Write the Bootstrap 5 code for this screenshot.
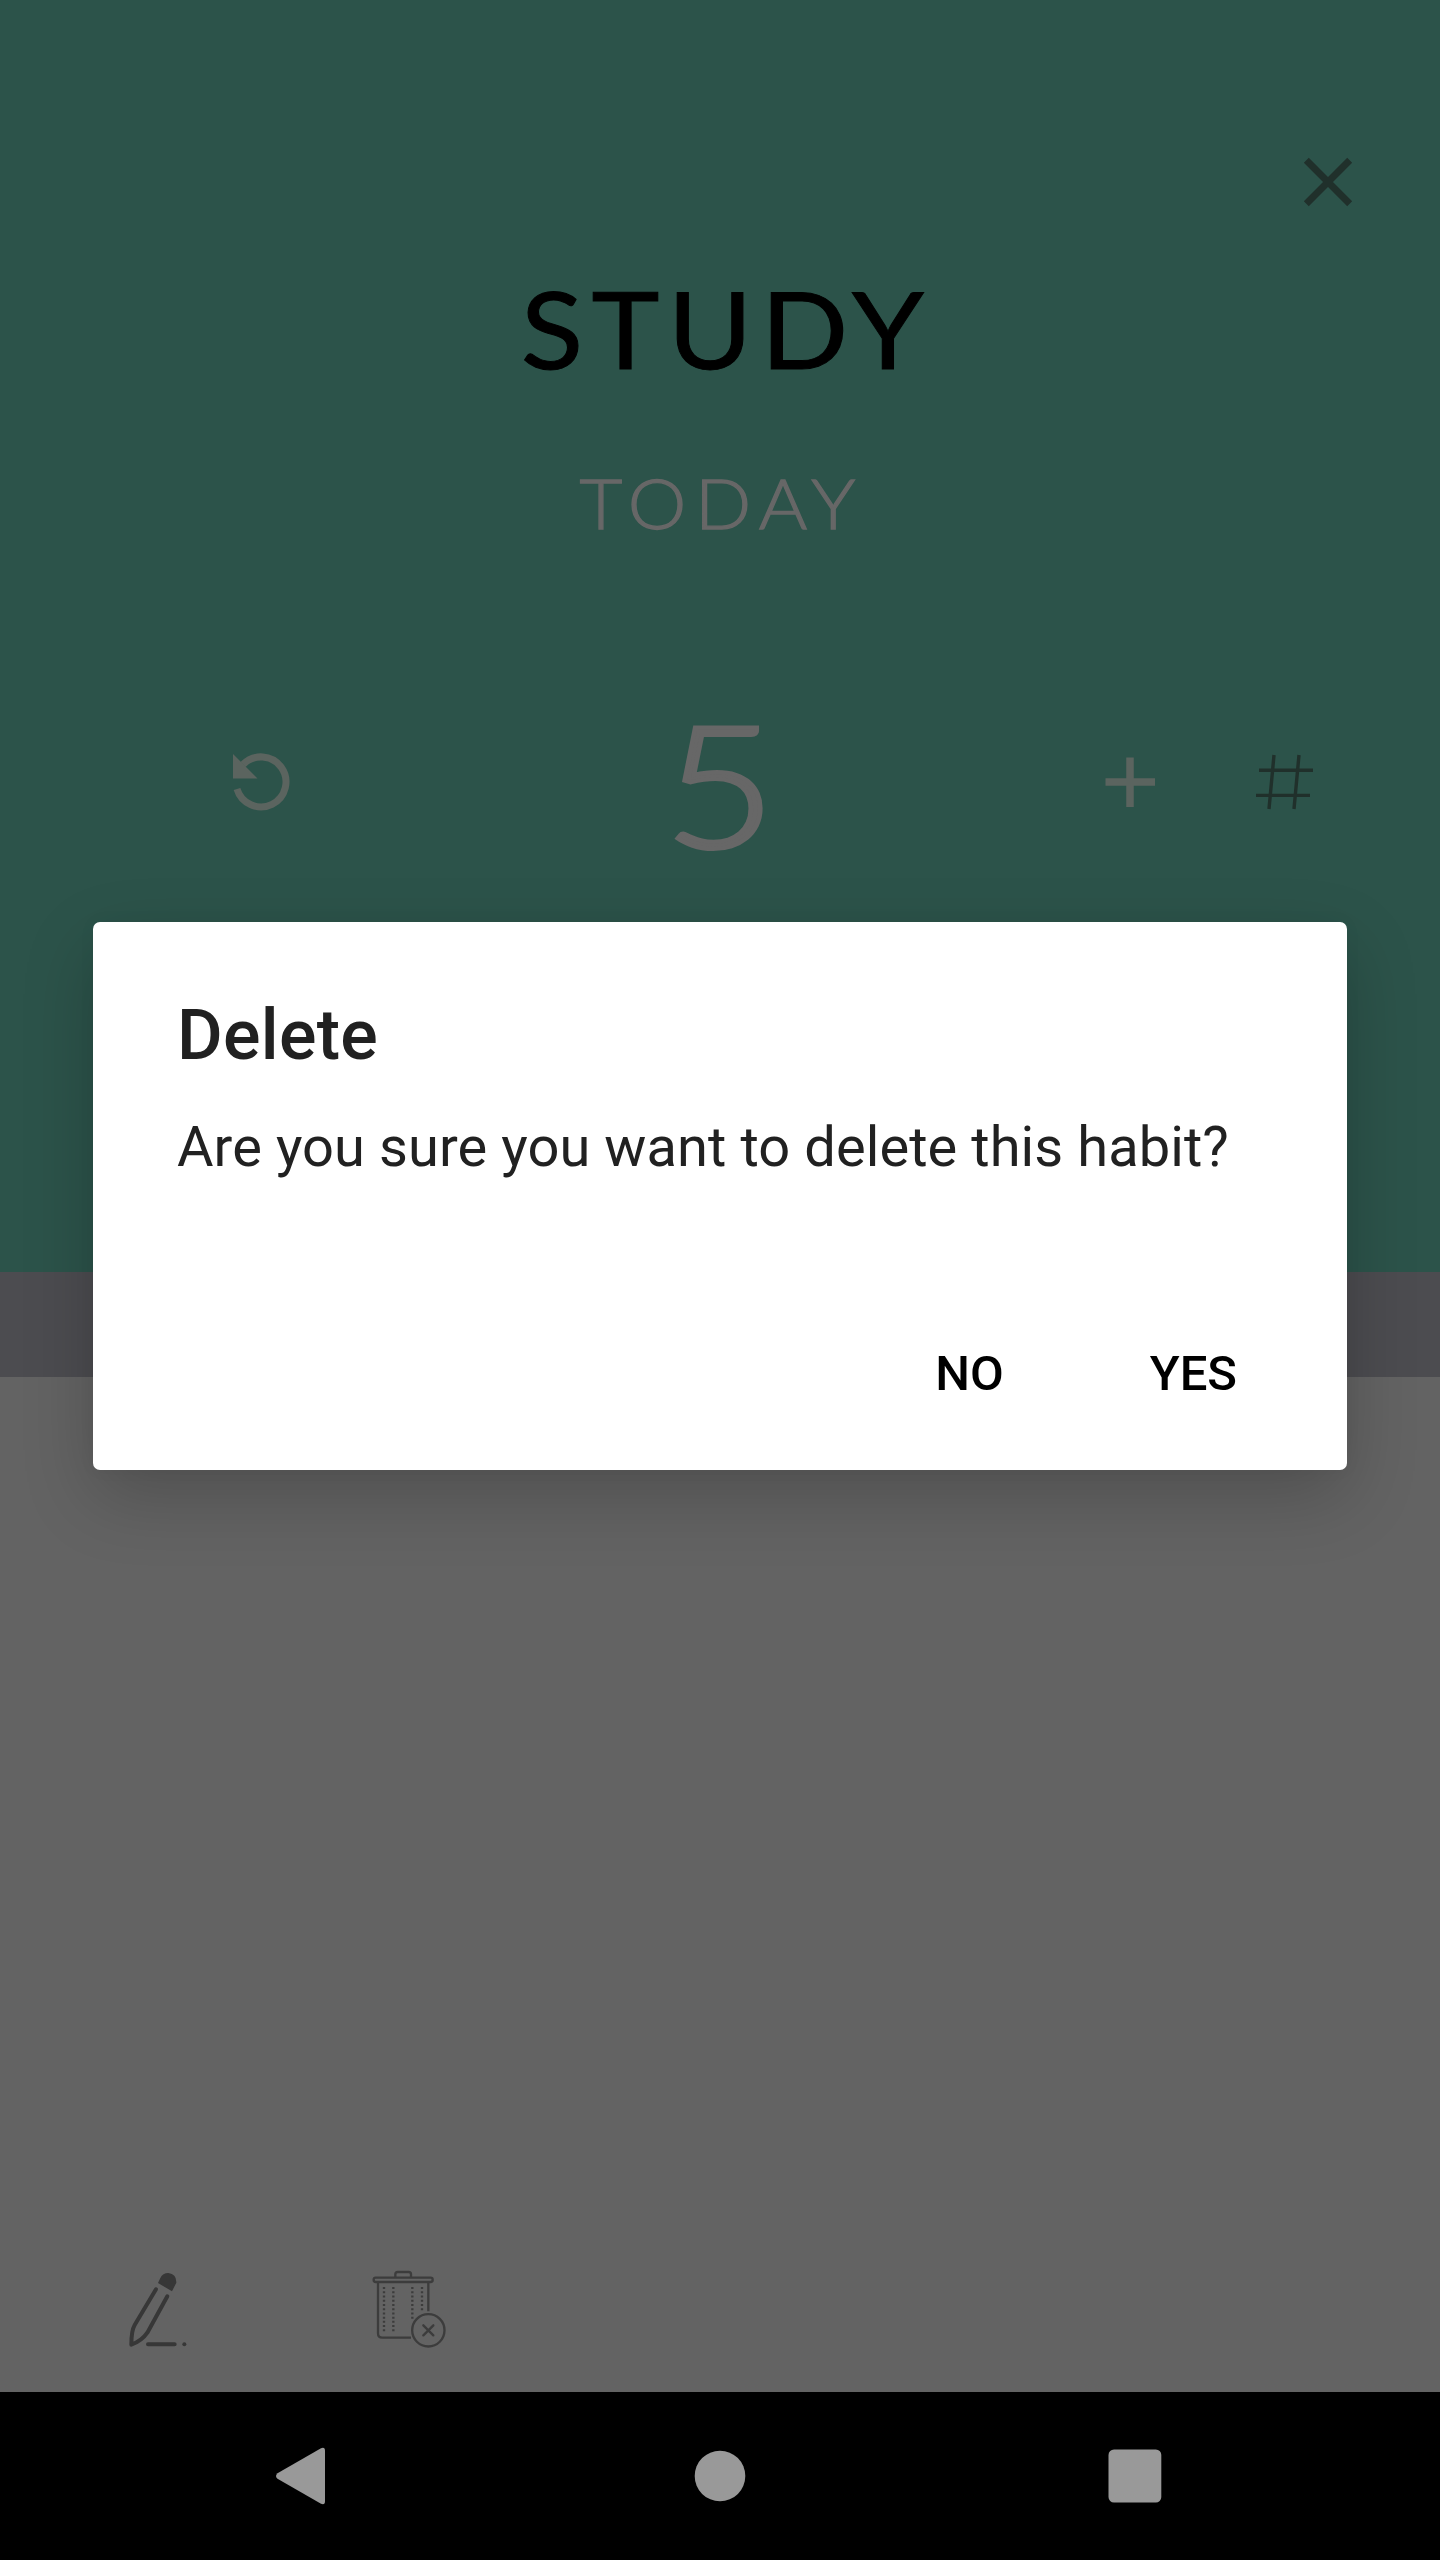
<!DOCTYPE html>
<html lang="en">
<head>
<meta charset="utf-8">
<meta name="viewport" content="width=device-width, initial-scale=1">
<title>Study</title>
<link href="https://cdn.jsdelivr.net/npm/bootstrap@5.3.0/dist/css/bootstrap.min.css" rel="stylesheet">
<style>
body{font-family:Roboto,"Liberation Sans",sans-serif;background:#636363;}
.screen{width:1440px;height:2560px;overflow:hidden;}
.habit-head{height:1272px;background:#2c534a;font-family:Lato,"Liberation Sans",sans-serif;padding-top:152px;}
.close-row{height:116px;padding-right:82px;}
.habit-title{font-size:107px;line-height:120px;letter-spacing:7.8px;color:#000;font-weight:400;padding-left:13px;}
.title-word{transform:scaleX(1.075);-webkit-text-stroke:1px #000;}
.habit-day{font-size:68.500px;line-height:80px;letter-spacing:8px;color:#676767;margin-top:75px;font-weight:300;padding-left:4px;}
.day-word{transform:scaleX(1.08);-webkit-text-stroke:1.3px #676767;}
.counter{height:180px;margin-top:149px;padding-left:228px;padding-right:122px;}
.count-num{font-size:169px;line-height:180px;color:#676767;width:120px;margin-left:366px;font-weight:300;-webkit-text-stroke:4.2px #676767;transform:scaleX(1.14);padding-top:2px;}
.ico-plus{margin-left:320px;}
.ico-hash{margin-left:93px;}
.strip{height:105px;background:#4c4c50;}
.tools{padding:0 0 36px 120px;gap:176px;}
.sysbar{height:168px;background:#000;}
.sysbar svg{display:block;}
.dialog-box{left:93px;top:922px;width:1254px;height:548px;border-radius:7px;padding:73px 84px 66px;box-shadow:0 26px 72px rgba(0,0,0,.2),0 0 18px rgba(0,0,0,.04);color:#212121;}
.dialog-title{font-size:70px;line-height:80px;letter-spacing:.3px;font-weight:500;}
.dialog-text{font-size:56px;line-height:64px;margin-top:40px;letter-spacing:.08px;white-space:nowrap;}
.dialog-btn{font-size:49px;line-height:60px;color:#000;font-weight:500;}
.btn-no{margin-right:146px;}
.btn-yes{margin-right:26px;}
</style>
</head>
<body>
<main class="screen position-relative d-flex flex-column">
<header class="habit-head">
<div class="close-row d-flex justify-content-end">
<svg width="60" height="60" viewBox="1298 152 60 60"><path d="M1306.3 160.3 1349.7 203.7M1349.7 160.3 1306.3 203.7" stroke="#20302b" stroke-width="7"/></svg>
</div>
<h1 class="habit-title text-center m-0"><span class="title-word d-inline-block">STUDY</span></h1>
<div class="habit-day text-center"><span class="day-word d-inline-block">TODAY</span></div>
<div class="counter d-flex align-items-center">
<svg width="66" height="66" viewBox="228 749 66 66"><path d="M237 789A25 25 0 1 0 243 764.5" fill="none" stroke="#5b645f" stroke-width="7"/><path d="M233 754V778.5H257.5Z" fill="#5b645f"/></svg>
<span class="count-num text-center">5</span>
<svg class="ico-plus" width="60" height="60" viewBox="1100 752 60 60"><path d="M1105.5 782H1155M1130 757.5V807" stroke="#5b645f" stroke-width="7.5"/></svg>
<svg class="ico-hash" width="64" height="64" viewBox="1253 750 64 64"><path d="M1259 770.2H1313M1256 795.4H1310M1274 755 1269 809M1299 755 1294 809" stroke="#20302b" stroke-width="3.4"/></svg>
</div>
</header>
<div class="strip"></div>
<section class="tools flex-grow-1 d-flex align-items-end">
<svg width="70" height="86" viewBox="60 60 210 258" fill="none" stroke="#373737" stroke-width="12" stroke-linecap="round" stroke-linejoin="round"><path d="M168 118 104 225Q94 242 94 284Q125 273 142 248L202 139M144 283H224"/><path d="M174 99 181 84Q188 69 205 69Q230 72 229 98L216 124Z" fill="#373737" stroke="none"/><circle cx="253" cy="283" r="6" fill="#373737" stroke="none"/></svg>
<svg width="80" height="86" viewBox="48 60 240 258" fill="none" stroke="#3c3c3c" stroke-width="7"><rect x="71" y="83" width="177" height="13" rx="6"/><path d="M136 82V73Q136 66 143 66H176Q183 66 183 73V82M84 97V250Q84 263 97 263H183M235 97V184"/><path d="M102 111V247M130 111V247M187 111V208M216 111V184" stroke-dasharray="6 6.7"/><circle cx="235" cy="241" r="48.5"/><path d="M220 226 250 256M250 226 220 256" stroke-linecap="round"/></svg>
</section>
<nav class="sysbar">
<svg width="1440" height="168" viewBox="0 2392 1440 168" fill="#999"><path d="M277.5 2473.2 321 2448.2Q325 2446.5 325 2451V2501Q325 2505.5 321 2503.8L277.5 2478.8Q274.5 2476 277.5 2473.2Z"/><circle cx="720" cy="2476" r="25.3"/><rect x="1108.5" y="2449.5" width="52.8" height="53" rx="5.5"/></svg>
</nav>
<section class="dialog-box position-absolute bg-white d-flex flex-column" role="dialog">
<h2 class="dialog-title m-0">Delete</h2>
<p class="dialog-text mb-0">Are you sure you want to delete this habit?</p>
<div class="d-flex justify-content-end mt-auto">
<button class="dialog-btn btn-no border-0 bg-transparent p-0">NO</button>
<button class="dialog-btn btn-yes border-0 bg-transparent p-0">YES</button>
</div>
</section>
</main>
<script src="https://cdn.jsdelivr.net/npm/bootstrap@5.3.0/dist/js/bootstrap.bundle.min.js"></script>
</body>
</html>
